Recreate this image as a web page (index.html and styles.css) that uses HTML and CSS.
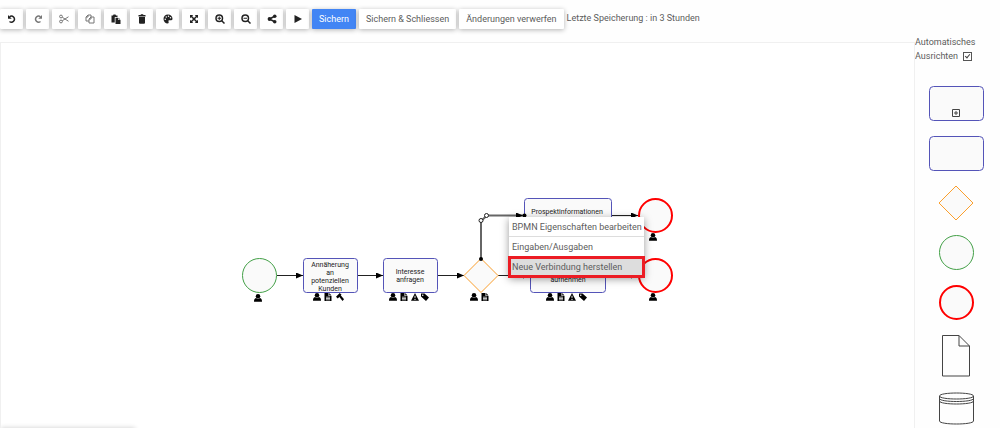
FILE: index.html
```html
<!DOCTYPE html>
<html lang="de">
<head>
    <meta charset="UTF-8">
    <meta name="viewport" content="width=device-width, initial-scale=1.0">
    <title>BPMN Editor</title>
    <link rel="stylesheet" href="styles.css">
</head>
<body>
    <header class="toolbar">
        <button type="button" class="tool" aria-label="Rückgängig">
            <svg class="icon" viewBox="0 0 20 20"><path class="line" d="M5 5.5A6 6 0 1 1 5 15"/><path d="M2 2v7.5h7.5z"/></svg>
        </button>
        <button type="button" class="tool muted" aria-label="Wiederholen">
            <svg class="icon" viewBox="0 0 20 20"><path class="line" d="M15 5.5A6 6 0 1 0 15 15"/><path d="M18 2v7.5h-7.5z"/></svg>
        </button>
        <button type="button" class="tool muted" aria-label="Ausschneiden">
            <svg class="icon" viewBox="0 0 20 20"><g class="thin"><circle cx="4" cy="5" r="2.8"/><circle cx="4" cy="15" r="2.8"/><path d="M6.5 6.5L19 14.5M6.5 13.5L19 5.5"/></g></svg>
        </button>
        <button type="button" class="tool muted" aria-label="Kopieren">
            <svg class="icon" viewBox="0 0 20 20"><g class="thin"><path d="M8 14H2V6l4-4h6v4M2 6h4V2"/><path d="M8 10l4-4h6v12H8zM8 10h4V6"/></g></svg>
        </button>
        <button type="button" class="tool" aria-label="Einfügen">
            <svg class="icon" viewBox="0 0 20 20"><path d="M1 3h3l1-2h4l1 2h3v3H7.5v11H1z"/><path d="M9 7.5h5V12h5v8H9zM15 7.5l4 3.5h-4z"/></svg>
        </button>
        <button type="button" class="tool" aria-label="Löschen">
            <svg class="icon" viewBox="0 0 20 20"><path d="M3 2h4l1-1.5h4L13 2h4v3H3zM4 6h12v11.5a2 2 0 0 1-2 2H6a2 2 0 0 1-2-2z"/></svg>
        </button>
        <button type="button" class="tool" aria-label="Farbe">
            <svg class="icon" viewBox="0 0 20 20"><path fill-rule="evenodd" d="M10 1C4.5 1 1 5 1 10s4 9 8 9c3 0 2.5-2.5 2-4s.5-2.5 2-2.5h3.5c2 0 2.5-1.5 2.5-3C19 4.5 15 1 10 1zM4.5 9a1.5 1.5 0 1 0 0 3 1.5 1.5 0 0 0 0-3zM6.5 4.5a1.5 1.5 0 1 0 0 3 1.5 1.5 0 0 0 0-3zM11 3a1.5 1.5 0 1 0 0 3 1.5 1.5 0 0 0 0-3zM15 6a1.5 1.5 0 1 0 0 3 1.5 1.5 0 0 0 0-3z"/></svg>
        </button>
        <button type="button" class="tool" aria-label="Einpassen">
            <svg class="icon" viewBox="0 0 20 20"><path d="M2 2h6.5L2 8.5zM18 2v6.5L11.5 2zM2 18v-6.5L8.5 18zM18 18h-6.5l6.5-6.5z"/><path class="line" d="M4 4l12 12M16 4L4 16"/></svg>
        </button>
        <button type="button" class="tool" aria-label="Vergrößern">
            <svg class="icon" viewBox="0 0 20 20"><circle class="line" cx="8.5" cy="8.5" r="6.5"/><path class="line" d="M13.5 13.5L19 19"/><path d="M7.5 5h2v2.5H12v2H9.5V12h-2V9.5H5v-2h2.5z"/></svg>
        </button>
        <button type="button" class="tool" aria-label="Verkleinern">
            <svg class="icon" viewBox="0 0 20 20"><circle class="line" cx="8.5" cy="8.5" r="6.5"/><path class="line" d="M13.5 13.5L19 19"/><path d="M5 7.5h7v2H5z"/></svg>
        </button>
        <button type="button" class="tool" aria-label="Teilen">
            <svg class="icon" viewBox="0 0 20 20"><circle cx="5" cy="10" r="3.8"/><circle cx="15.5" cy="4.5" r="3.5"/><circle cx="15.5" cy="15.5" r="3.5"/><path class="line" d="M15 4.5L5 10l10 5.5"/></svg>
        </button>
        <button type="button" class="tool" aria-label="Abspielen">
            <svg class="icon" viewBox="0 0 20 20"><path d="M3 2l15 8-15 8z"/></svg>
        </button>
        <button type="button" class="action primary">Sichern</button>
        <button type="button" class="action">Sichern &amp; Schliessen</button>
        <button type="button" class="action">Änderungen verwerfen</button>
        <span class="last-saved">Letzte Speicherung : in 3 Stunden</span>
    </header>

    <main class="workspace">
        <section class="canvas">
            <svg class="diagram" role="img" aria-label="Prozessdiagramm">
                <defs>
                    <marker id="arrow" viewBox="0 0 7 6" refX="7" refY="3" markerWidth="7" markerHeight="6" markerUnits="userSpaceOnUse" orient="auto"><path d="M0 0l7 3-7 3z"/></marker>
                    <symbol id="user" viewBox="0 0 16 16"><circle cx="8" cy="4.5" r="4.5"/><path d="M4 8C1 9 0 11 0 15.5h16c0-4.5-1-6.5-4-7.5-2 1.8-6 1.8-8 0z"/></symbol>
                    <symbol id="file" viewBox="0 0 16 16"><path fill-rule="evenodd" d="M1 0h8v6h6v10H1zM10.5 0L15 5h-4.5zM4 7.5V9h8V7.5zm0 2.7v1.5h8v-1.5zm0 2.6v1.5h8v-1.5z"/></symbol>
                    <symbol id="gavel" viewBox="0 0 16 16"><path d="M7.5 0L11 3.5 3.5 11 0 7.5z"/><path d="M6 7l3-3 7 8.5-3 3.5z"/></symbol>
                    <symbol id="warning" viewBox="0 0 16 16"><path fill-rule="evenodd" d="M8 0l8 15.5H0zM7 5.5l.3 5h1.4l.3-5zM7 12v2h2v-2z"/></symbol>
                    <symbol id="tag" viewBox="0 0 16 16"><path fill-rule="evenodd" d="M0 1h7l9 8-6 7-10-9zM3.5 3a1.5 1.5 0 1 0 0 3 1.5 1.5 0 0 0 0-3z"/></symbol>
                </defs>
                <g transform="translate(-1 -43)">
                    <!-- sequence flows -->
                    <g class="flow">
                        <path d="M277 275.5H303"/>
                        <path d="M357 275.5H383"/>
                        <path d="M438 275.5H464"/>
                        <path d="M498 275.5H530"/>
                        <path d="M606 275.5H638"/>
                        <path d="M612 215.5H638"/>
                        <path class="selected" d="M481 259V221L487 215.5H523"/>
                    </g>

                    <!-- nodes -->
                    <circle class="start" cx="259.5" cy="275.5" r="17"/>
                    <rect class="task" x="303.5" y="258.5" width="54" height="34" rx="3"/>
                    <rect class="task" x="383.5" y="258.5" width="54" height="34" rx="3"/>
                    <path class="gateway" d="M481 258.5l17 17-17 17-17-17z"/>
                    <rect class="task" x="524.5" y="198.5" width="87" height="34" rx="3"/>
                    <rect class="task" x="530.5" y="258.5" width="75" height="34" rx="3"/>
                    <circle class="end" cx="655.5" cy="215.5" r="16.5"/>
                    <circle class="end" cx="655.5" cy="275.5" r="16.5"/>
                    <circle cx="481" cy="259" r="2"/>
                    <circle cx="524.5" cy="215.5" r="2"/>
                    <circle class="bend" cx="481" cy="220.5" r="2"/>
                    <circle class="bend" cx="486.5" cy="215.5" r="2"/>

                    <g class="label">
                        <text x="330" y="267">Annäherung</text>
                        <text x="330" y="275">an</text>
                        <text x="330" y="283">potenziellen</text>
                        <text x="330" y="291">Kunden</text>
                        <text x="410" y="274">Interesse</text>
                        <text x="410" y="282">anfragen</text>
                        <text x="567" y="214">Prospektinformationen</text>
                        <text x="568" y="282">aufnehmen</text>
                    </g>

                    <!-- markers below the nodes -->
                    <use href="#user" x="254" y="294" width="8" height="8"/>
                    <use href="#user" x="313" y="293" width="8" height="8"/>
                    <use href="#file" x="324" y="293" width="8" height="8"/>
                    <use href="#gavel" x="336" y="293" width="8" height="8"/>
                    <use href="#user" x="389" y="293" width="8" height="8"/>
                    <use href="#file" x="400" y="293" width="8" height="8"/>
                    <use href="#warning" x="411" y="293" width="8" height="8"/>
                    <use href="#tag" x="421" y="293" width="8" height="8"/>
                    <use href="#user" x="470" y="293" width="8" height="8"/>
                    <use href="#file" x="481" y="293" width="8" height="8"/>
                    <use href="#user" x="546" y="293" width="8" height="8"/>
                    <use href="#file" x="557" y="293" width="8" height="8"/>
                    <use href="#warning" x="568" y="293" width="8" height="8"/>
                    <use href="#tag" x="579" y="293" width="8" height="8"/>
                    <use href="#user" x="649" y="233" width="8" height="8"/>
                    <use href="#user" x="649" y="293" width="8" height="8"/>
                </g>
            </svg>

            <div class="context-menu" role="menu">
                <button type="button" role="menuitem">BPMN Eigenschaften bearbeiten</button>
                <button type="button" role="menuitem">Eingaben/Ausgaben</button>
                <button type="button" role="menuitem" class="highlighted">Neue Verbindung herstellen</button>
            </div>
            <div class="bottom-panel"></div>
        </section>

        <aside class="palette">
            <label class="auto-align" for="auto-align">Automatisches Ausrichten <input type="checkbox" id="auto-align" checked></label>
            <div class="shapes">
                <button type="button" aria-label="Teilprozess">
                    <svg width="56" height="35"><rect class="task" x="1.5" y=".5" width="54" height="34" rx="4"/><path class="outline" d="M24.5 23.5h7v7h-7zM28 25v4M26 27h4"/></svg>
                </button>
                <button type="button" aria-label="Aufgabe">
                    <svg width="56" height="35"><rect class="task" x="1.5" y=".5" width="54" height="34" rx="4"/></svg>
                </button>
                <button type="button" aria-label="Gateway">
                    <svg width="56" height="35"><path class="gateway" d="M28 0l17 17-17 17-17-17z"/></svg>
                </button>
                <button type="button" aria-label="Startereignis">
                    <svg width="56" height="35"><circle class="start" cx="28.5" cy="16.5" r="17"/></svg>
                </button>
                <button type="button" aria-label="Endereignis">
                    <svg width="56" height="35"><circle class="end" cx="28.5" cy="16.5" r="16.5"/></svg>
                </button>
                <button type="button" aria-label="Datenobjekt">
                    <svg width="56" height="41"><path class="outline" d="M14.5-.5H31L41.5 10v30h-27zM31-.5V10h10.5"/></svg>
                </button>
                <button type="button" aria-label="Datenspeicher">
                    <svg width="56" height="34"><path class="outline" d="M11.5 4v25c0 4 34 4 34 0V4c0-4-34-4-34 0c0 4 34 4 34 0M11.5 6.5c0 4 34 4 34 0M11.5 9c0 4 34 4 34 0"/></svg>
                </button>
            </div>
        </aside>
    </main>
</body>
</html>
```

FILE: styles.css
```css
*,
*:before,
*:after {
    padding: 0;
    margin: 0;
    box-sizing: border-box;
}
body {
    display: flex;
    flex-direction: column;
    height: 100vh;
    overflow: hidden;
    background-color: #fefefe;
    color: #5c5c5c;
    font-family: Roboto, sans-serif;
    font-size: 9px;
}
button {
    border: none;
    background: none;
    color: inherit;
    font: inherit;
    cursor: pointer;
}

/* Toolbar */
.toolbar {
    display: flex;
    align-items: center;
    gap: 3px;
    padding: 9px 0 6px;
}
.tool,
.action {
    height: 20px;
    border-radius: 1px;
    background-color: #ffffff;
    box-shadow: 0 1px 5px rgba(0, 0, 0, 0.3);
}
.tool {
    display: flex;
    align-items: center;
    justify-content: center;
    width: 23px;
    color: #222222;
}
.tool.muted {
    color: #777777;
}
.action {
    padding: 0 7px;
}
.action.primary {
    background-color: #4285f4;
    color: #ffffff;
}
.last-saved {
    line-height: 18px;
    align-self: flex-start;
}
.icon {
    width: 10px;
    height: 10px;
    fill: currentColor;
}
.icon .line {
    fill: none;
    stroke: currentColor;
    stroke-width: 3;
}
.icon .thin {
    fill: none;
    stroke: currentColor;
    stroke-width: 2;
}

/* Workspace */
.workspace {
    display: flex;
    flex: 1;
    min-height: 0;
}
.canvas {
    position: relative;
    flex: 1;
    margin-top: 7px;
    overflow: hidden;
    border: 1px solid #f0f0f0;
    border-bottom: none;
    background-color: #ffffff;
}
.diagram {
    display: block;
    width: 100%;
    height: 100%;
}
.flow path {
    fill: none;
    stroke: #222222;
    stroke-width: 1;
    stroke-linejoin: round;
    marker-end: url(#arrow);
}
.flow .selected {
    stroke: #666666;
    stroke-width: 2;
}
.task,
.start,
.end,
.gateway {
    fill: #fafafa;
}
.task {
    stroke: #5454b8;
}
.start {
    stroke: #43a047;
}
.end {
    stroke: #ff0000;
    stroke-width: 2;
}
.gateway {
    stroke: #fb9f2c;
}
.bend {
    fill: #ffffff;
    stroke: #222222;
}
.label {
    fill: #222222;
    font-size: 7px;
    text-anchor: middle;
}

.context-menu {
    position: absolute;
    top: 174px;
    left: 508px;
    display: flex;
    flex-direction: column;
    background-color: #ffffff;
    box-shadow: 0 2px 8px rgba(0, 0, 0, 0.4);
}
.context-menu button {
    height: 20px;
    padding: 0 2px 0 3px;
    border-bottom: 1px solid #dddddd;
    text-align: left;
    white-space: nowrap;
}
.context-menu .highlighted {
    border-bottom: none;
    outline: 3px solid #ec1c24;
    outline-offset: -2px;
    background-color: #dddddd;
}
.bottom-panel {
    position: absolute;
    top: 100%;
    left: 0;
    width: 134px;
    height: 20px;
    box-shadow: 0 0 5px rgba(0, 0, 0, 0.2);
}

/* Palette */
.palette {
    width: 85px;
}
.auto-align {
    display: block;
    line-height: 14px;
}
.auto-align input {
    appearance: none;
    position: relative;
    width: 9px;
    height: 9px;
    margin-left: 3px;
    border: 1px solid #555555;
    background-color: #ffffff;
    vertical-align: middle;
}
.auto-align input:checked::after {
    content: "";
    position: absolute;
    top: 0;
    left: 2px;
    width: 3px;
    height: 5px;
    border: solid #444444;
    border-width: 0 1px 1px 0;
    transform: rotate(40deg);
}
.shapes {
    display: flex;
    flex-direction: column;
    align-items: center;
    gap: 15px;
    padding: 23px 3px 0 0;
}
.shapes svg {
    display: block;
    overflow: visible;
}
.outline {
    fill: none;
    stroke: #444444;
}
```
